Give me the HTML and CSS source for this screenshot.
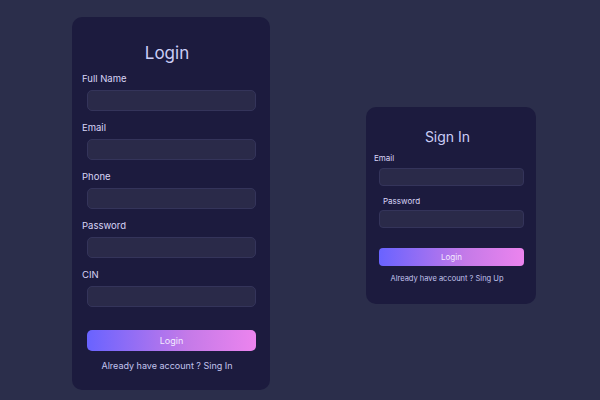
FILE: index.html
```html
<!DOCTYPE html>
<html lang="en">
<head>
<meta charset="utf-8">
<title>Login</title>
<link rel="stylesheet" href="styles.css">
</head>
<body>
<main class="page">
  <form class="card card-lg">
    <h1 class="title">Login</h1>
    <label class="label">Full Name</label>
    <input class="input" type="text">
    <label class="label">Email</label>
    <input class="input" type="email">
    <label class="label">Phone</label>
    <input class="input" type="text">
    <label class="label">Password</label>
    <input class="input" type="password">
    <label class="label">CIN</label>
    <input class="input" type="text">
    <button class="btn" type="button">Login</button>
    <p class="link">Already have account ? Sing In</p>
  </form>
  <form class="card card-sm">
    <h1 class="title">Sign In</h1>
    <label class="label">Email</label>
    <input class="input" type="email">
    <label class="label label-indent">Password</label>
    <input class="input" type="password">
    <button class="btn" type="button">Login</button>
    <p class="link">Already have account ? Sing Up</p>
  </form>
</main>
</body>
</html>
```
FILE: styles.css
```css
* { box-sizing: border-box; }
html, body { margin: 0; padding: 0; }
body {
  background: #2b2e4b;
  font-family: "Inter", "DejaVu Sans", sans-serif;
  color: #d6d4f4;
}
.page {
  height: 400px;
  padding: 17px 0 0 72px;
  display: flex;
  align-items: flex-start;
  gap: 96px;
  overflow: hidden;
}
.card {
  display: flex;
  flex-direction: column;
  align-items: flex-start;
  background: #1c1b3e;
  border-radius: 10px;
  margin: 0;
}
.title {
  align-self: stretch;
  text-align: center;
  font-weight: 400;
  color: #cbcdf6;
  margin: 0;
}
.label { color: #d8d4f6; }
.input {
  display: block;
  background: #2a2a49;
  border: 1px solid #34345a;
  border-radius: 5px;
  outline: none;
  padding: 0;
}
.btn {
  display: block;
  border: none;
  color: #f3eaff;
  background: linear-gradient(90deg, #6963ff 0%, #c57ae8 60%, #ec84ee 100%);
  font-family: inherit;
  padding: 0;
}
.link {
  align-self: stretch;
  text-align: center;
  margin: 0;
  color: #c2c4ee;
}

/* large card */
.card-lg {
  width: 198px;
  padding: 24px 13px 17px 10px;
}
.card-lg .title { font-size: 17px; line-height: 24px; margin-bottom: 7px; padding-right: 5px; }
.card-lg .label { font-size: 9.5px; line-height: 14px; margin-bottom: 4px; }
.card-lg .input { width: 169px; height: 21px; margin: 0 0 10px 5px; }
.card-lg .btn { width: 169px; height: 21px; margin: 13px 0 8px 5px; border-radius: 5px; font-size: 9px; }
.card-lg .link { font-size: 9px; line-height: 14px; padding-right: 5px; }

/* small card */
.card-sm {
  width: 170px;
  margin-top: 90px;
  padding: 20px 11px 19px 8px;
}
.card-sm .title { font-size: 14px; line-height: 20px; margin-bottom: 5px; padding-right: 4px; }
.card-sm .label { font-size: 8px; line-height: 12px; margin-bottom: 4px; }
.card-sm .label-indent { margin-left: 9px; margin-bottom: 3px; }
.card-sm .input { width: 145px; height: 18px; margin: 0 0 9px 5px; border-radius: 4px; }
.card-sm .btn { width: 145px; height: 18px; margin: 11px 0 7px 5px; border-radius: 4px; font-size: 8px; }
.card-sm .link { font-size: 7.5px; line-height: 12px; padding-right: 5px; }
```
